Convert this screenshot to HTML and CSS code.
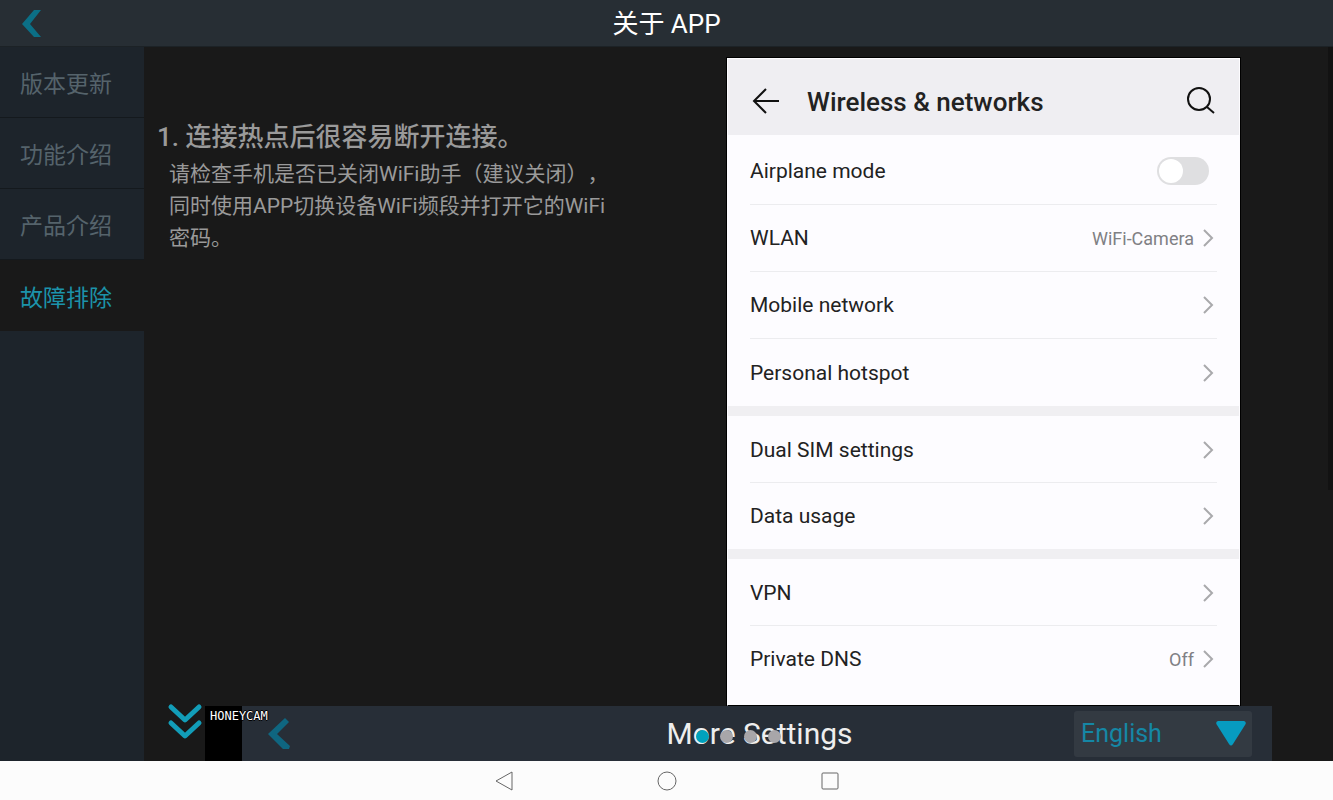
FILE: index.html
```html
<!DOCTYPE html>
<html lang="zh-CN">
<head>
  <meta charset="UTF-8">
  <meta name="viewport" content="width=device-width, initial-scale=1">
  <title>关于 APP</title>
  <link rel="stylesheet" href="styles.css">
</head>
<body>

<header class="header">
  <button class="back" type="button" aria-label="返回">
    <svg width="20" height="28" viewBox="0 0 20 28"><path d="M12 0h7L8 14l11 13h-7L0 14z"/></svg>
  </button>
  <h1>关于 APP</h1>
</header>

<div class="main">
  <nav class="sidebar">
    <ul>
      <li><a href="#version">版本更新</a></li>
      <li><a href="#function">功能介绍</a></li>
      <li><a href="#product">产品介绍</a></li>
      <li class="current"><a href="#trouble">故障排除</a></li>
    </ul>
  </nav>

  <main class="content">
    <div class="slide">
      <div class="text">
        <h2>1. 连接热点后很容易断开连接。</h2>
        <p>请检查手机是否已关闭WiFi助手（建议关闭），同时使用APP切换设备WiFi频段并打开它的WiFi密码。</p>
      </div>

      <!-- 手机设置界面 -->
      <section class="phone" lang="en">
        <div class="phone-head">
          <button type="button" aria-label="Back">
            <svg width="28" height="28" viewBox="0 0 28 28"><path d="M27 14H2M14 2L2 14l12 12"/></svg>
          </button>
          <h3>Wireless &amp; networks</h3>
          <button type="button" aria-label="Search">
            <svg width="28" height="28" viewBox="0 0 28 28"><circle cx="12" cy="12" r="11"/><path d="M20 20l7 6"/></svg>
          </button>
        </div>
        <ul class="group first">
          <li><label for="airplane">Airplane mode</label><input class="switch" id="airplane" type="checkbox"></li>
          <li><a href="#wlan">WLAN<span>WiFi-Camera</span><svg class="arrow" width="12" height="20" viewBox="0 0 12 20"><path d="M2 2l8 8-8 8"/></svg></a></li>
          <li><a href="#mobile">Mobile network<svg class="arrow" width="12" height="20" viewBox="0 0 12 20"><path d="M2 2l8 8-8 8"/></svg></a></li>
          <li><a href="#hotspot">Personal hotspot<svg class="arrow" width="12" height="20" viewBox="0 0 12 20"><path d="M2 2l8 8-8 8"/></svg></a></li>
        </ul>
        <ul class="group">
          <li><a href="#sim">Dual SIM settings<svg class="arrow" width="12" height="20" viewBox="0 0 12 20"><path d="M2 2l8 8-8 8"/></svg></a></li>
          <li><a href="#data">Data usage<svg class="arrow" width="12" height="20" viewBox="0 0 12 20"><path d="M2 2l8 8-8 8"/></svg></a></li>
        </ul>
        <ul class="group">
          <li><a href="#vpn">VPN<svg class="arrow" width="12" height="20" viewBox="0 0 12 20"><path d="M2 2l8 8-8 8"/></svg></a></li>
          <li><a href="#dns">Private DNS<span>Off</span><svg class="arrow" width="12" height="20" viewBox="0 0 12 20"><path d="M2 2l8 8-8 8"/></svg></a></li>
        </ul>
      </section>
    </div>

    <div class="more" lang="en">
      <div class="mark"><span>HONEYCAM</span></div>
      <div class="more-bar">
        <button class="back" type="button" aria-label="Back">
          <svg width="24" height="34" viewBox="0 0 24 34"><path d="M18 1l4 4-12 12 13 12-1 3h-6L1 17z"/></svg>
        </button>
        <h3>More Settings</h3>
        <div class="language">
          <select aria-label="Language"><option>English</option></select>
          <svg width="30" height="25" viewBox="0 0 30 25"><path d="M2 0h26q3 1 1 4L17 23q-2 3-4 0L1 4q-2-3 1-4z"/></svg>
        </div>
      </div>
    </div>

    <!-- 向下滚动 -->
    <svg class="down" width="36" height="38" viewBox="0 0 36 38"><path d="M4 5l14 13L32 5M4 21l14 13L32 21"/></svg>

    <div class="circles">
      <ol>
        <li class="current"></li>
        <li></li>
        <li></li>
        <li></li>
      </ol>
    </div>
    <div class="scroll"></div>
  </main>
</div>

<!-- 系统导航栏 -->
<footer class="system">
  <button type="button" aria-label="返回"><svg width="20" height="20" viewBox="0 0 20 20"><path d="M18 1v18L2 10z"/></svg></button>
  <button type="button" aria-label="主屏幕"><svg width="20" height="20" viewBox="0 0 20 20"><circle cx="10" cy="10" r="9"/></svg></button>
  <button type="button" aria-label="最近任务"><svg width="20" height="20" viewBox="0 0 20 20"><rect x="2" y="2" width="16" height="16" rx="1"/></svg></button>
</footer>

</body>
</html>
```
FILE: styles.css
```css
* { margin: 0; padding: 0; box-sizing: border-box; }
body { min-height: 100vh; display: flex; flex-direction: column;
  background: #191919; color: #fff;
  font-family: Roboto, "Noto Sans CJK SC", sans-serif; }
ul, ol { list-style: none; }
a { color: inherit; text-decoration: none; }
button { border: 0; background: none; cursor: pointer; font: inherit; }
svg { display: block; flex: none; }

.header { height: 47px; padding: 2px 22px 0; display: grid;
  grid-template-columns: 1fr auto 1fr; align-items: center;
  background: #272e34; border-bottom: 1px solid #1c2226; }
.header h1 { font-size: 26px; line-height: 32px; font-weight: 400; }
.back { justify-self: start; fill: #0b6f86; }

.main { flex: 1; display: flex; }
.sidebar { width: 144px; flex: none; background: #1d242b; }
.sidebar li { height: 71px; border-bottom: 1px solid #14191d;
  color: #55636b; font-size: 23px; }
.sidebar a { height: 100%; padding: 0 20px; display: flex;
  align-items: center; }
.sidebar li.current { background: #191919; color: #1c93aa;
  border-bottom: 0; }

.content { flex: 1; min-width: 0; position: relative;
  display: flex; flex-direction: column; }
.slide { flex: 1; display: grid;
  grid-template-columns: 583fr 513fr 93fr; padding-top: 11px; }
.text { padding: 62px 112px 0 13px; color: #9a9a9a;
  text-spacing-trim: space-all; }
.text h2 { font-size: 26px; line-height: 34px; font-weight: 500;
  white-space: nowrap; }
.text p { padding: 4px 0 0 12px; font-size: 21px; line-height: 32px; }

.phone { background: #fdfcff; color: #222;
  border: 1px solid #fdfcff; border-bottom: 1px solid #000;
  box-shadow: 0 0 0 1px #000; }
.phone-head { height: 76px; padding: 8px 24px 0; display: flex;
  align-items: center; gap: 27px; background: #efeef2; }
.phone-head h3 { flex: 1; padding-top: 2px; font-size: 26px;
  font-weight: 500; line-height: 32px; }
.phone-head svg { fill: none; stroke: #111; stroke-width: 2; }
.group { padding: 1px 22px 0; border-bottom: 10px solid #f0eff2;
  font-size: 21px; }
.group:last-child { border-bottom: 0; }
.group li { height: 66px; display: flex; align-items: center;
  justify-content: space-between; border-bottom: 1px solid #ececef; }
.group.first { padding-top: 3px; }
.group.first li { height: 67px; }
.group li:last-child { border-bottom: 0; }
.group a { flex: 1; display: flex; align-items: center; gap: 8px;
  padding-right: 3px; }
.group span { margin-left: auto; color: #808084; font-size: 18px; }
.arrow { margin-left: auto; fill: none; stroke: #a9a9ac;
  stroke-width: 2; }
.group span + .arrow { margin-left: 0; }
.switch { appearance: none; width: 52px; height: 28px;
  margin-right: 8px; padding: 2px; border-radius: 14px;
  background: #dfdfe1; cursor: pointer; }
.switch::before { content: ""; display: block; width: 24px;
  height: 24px; border-radius: 50%; background: #fff; }
.switch:checked::before { margin-left: auto; }

.more { padding: 0 61px; display: flex; }
.mark { width: 37px; position: relative; background: #000; }
.mark span { position: absolute; left: 5px; top: 3px; z-index: 1;
  font: 12px/14px "DejaVu Sans Mono", monospace; color: #fff;
  text-shadow: 1px 0 #000, -1px 0 #000, 0 1px #000, 0 -1px #000; }
.more-bar { flex: 1; height: 55px; padding: 0 20px 0 25px;
  display: grid; grid-template-columns: 1fr auto 1fr;
  align-items: center; background: #272e37; }
.more-bar .back { fill: #0f6680; }
.more-bar h3 { padding-top: 1px; font-size: 30px; line-height: 36px;
  font-weight: 400; color: #eee; }
.language { justify-self: end; width: 178px; height: 46px;
  position: relative; }
.language select { appearance: none; width: 100%; height: 100%;
  padding: 0 7px; border: 0; border-radius: 3px;
  background: #333a42; color: #1587a5; font: inherit;
  font-size: 25px; }
.language svg { position: absolute; right: 6px; top: 10px;
  fill: #079bc0; pointer-events: none; }

.down { position: absolute; left: 23px; bottom: 21px; fill: none;
  stroke: #129db8; stroke-width: 5; stroke-linecap: round;
  stroke-linejoin: round; }
.circles { position: absolute; left: 0; right: 0; bottom: 18px; }
.circles ol { display: flex; justify-content: center; gap: 11px; }
.circles ol li { width: 13px; height: 13px; border-radius: 50%;
  background: #a8a6a9; }
.circles ol li.current { background: #00a1bd; }
.scroll { position: absolute; right: 0; top: 0; width: 5px;
  height: 62%; background: #121212; }

.system { height: 39px; display: flex; justify-content: center;
  align-items: center; gap: 143px; background: #fcfcfc; }
.system svg { fill: none; stroke: #666; stroke-width: 1; }
```
